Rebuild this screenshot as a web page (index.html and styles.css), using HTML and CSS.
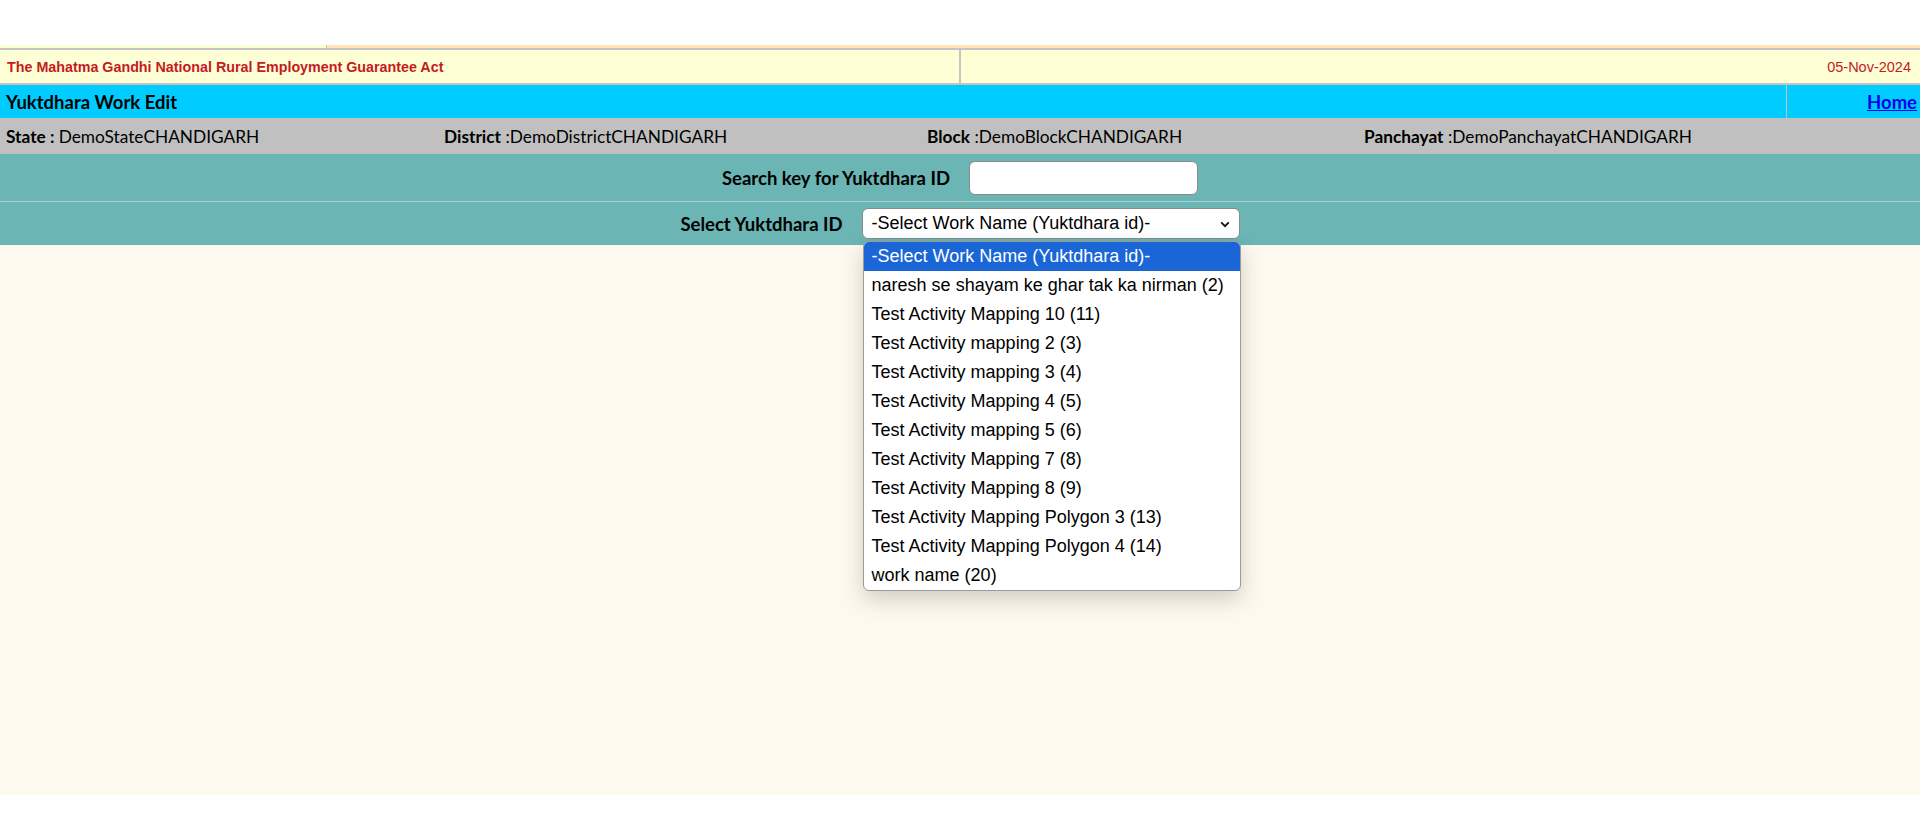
FILE: index.html
```html
<!DOCTYPE html>
<html lang="en">
<head>
<meta charset="utf-8">
<title>Yuktdhara Work Edit</title>
<link rel="stylesheet" href="styles.css">
</head>
<body>
<div class="topspace"></div>
<div class="page">
  <div class="strip"><div class="strip-left"></div><div class="strip-right"></div></div>
  <div class="actbar">
    <div class="act-title">The Mahatma Gandhi National Rural Employment Guarantee Act</div>
    <div class="act-date">05-Nov-2024</div>
  </div>
  <div class="titlebar">
    <div class="title">Yuktdhara Work Edit</div>
    <div class="home"><a href="#">Home</a></div>
  </div>
  <div class="locbar">
    <div class="loc"><b>State : </b>DemoStateCHANDIGARH</div>
    <div class="loc"><b>District</b> :DemoDistrictCHANDIGARH</div>
    <div class="loc"><b>Block</b> :DemoBlockCHANDIGARH</div>
    <div class="loc"><b>Panchayat</b> :DemoPanchayatCHANDIGARH</div>
  </div>
  <div class="formrow row1">
    <div class="flabel">Search key for Yuktdhara ID</div>
    <div class="searchbox"></div>
  </div>
  <div class="formrow row2">
    <div class="flabel">Select Yuktdhara ID</div>
    <div class="selwrap">
      <div class="select">-Select Work Name (Yuktdhara id)-
        <svg class="chev" width="10" height="7" viewBox="0 0 10 7"><path d="M1.2 1.3 L5 5.2 L8.8 1.3" fill="none" stroke="#111" stroke-width="1.8"/></svg>
      </div>
      <div class="popup">
        <div class="opt sel">-Select Work Name (Yuktdhara id)-</div>
        <div class="opt">naresh se shayam ke ghar tak ka nirman (2)</div>
        <div class="opt">Test Activity Mapping 10 (11)</div>
        <div class="opt">Test Activity mapping 2 (3)</div>
        <div class="opt">Test Activity mapping 3 (4)</div>
        <div class="opt">Test Activity Mapping 4 (5)</div>
        <div class="opt">Test Activity mapping 5 (6)</div>
        <div class="opt">Test Activity Mapping 7 (8)</div>
        <div class="opt">Test Activity Mapping 8 (9)</div>
        <div class="opt">Test Activity Mapping Polygon 3 (13)</div>
        <div class="opt">Test Activity Mapping Polygon 4 (14)</div>
        <div class="opt">work name (20)</div>
      </div>
    </div>
  </div>
</div>
</body>
</html>
```

FILE: styles.css
```css
html, body {
  margin: 0;
  padding: 0;
  background: #ffffff;
}
body {
  font-family: "Lato", "Open Sans", sans-serif;
  color: #000;
}
.topspace {
  height: 45px;
}
.page {
  background: #fef9ee;
  height: 750px;
}
.strip {
  display: flex;
  height: 3px;
}
.strip-left {
  width: 326px;
  background: #ffffd6;
  border-right: 1px solid #c8c8c8;
}
.strip-right {
  flex: 1;
  background: #ffe4b5;
}
.actbar {
  display: grid;
  grid-template-columns: 961px 1fr;
  height: 33px;
  border-top: 2px solid #c4c4c4;
  border-bottom: 2px solid #c4c4c4;
  background: #ffffd6;
  font-family: "Liberation Sans", Arial, sans-serif;
  font-size: 14.3px;
  color: #c41a24;
}
.act-title {
  font-weight: bold;
  padding-left: 7px;
  display: flex;
  align-items: center;
  border-right: 2px solid #c4c4c4;
}
.act-date {
  display: flex;
  align-items: center;
  justify-content: flex-end;
  padding-right: 9px;
  font-size: 14.5px;
}
.titlebar {
  display: grid;
  grid-template-columns: 1787px 1fr;
  height: 33px;
  background: #00ccff;
  border-bottom: 1px solid #c4c4c4;
}
.title {
  font-weight: bold;
  font-size: 18.5px;
  padding-left: 6px;
  display: flex;
  align-items: center;
  border-right: 1px solid #c4c4c4;
}
.home {
  display: flex;
  align-items: center;
  justify-content: flex-end;
  padding-right: 3px;
  font-weight: bold;
  font-size: 18.5px;
}
.home a {
  color: #0000ee;
  text-decoration: underline;
}
.locbar {
  display: grid;
  grid-template-columns: 438px 483px 437px 1fr;
  height: 35px;
  background: #c0c0c0;
  font-size: 17.3px;
}
.loc {
  display: flex;
  align-items: center;
  padding-left: 6px;
  white-space: pre;
}
.formrow {
  display: flex;
  justify-content: center;
  align-items: center;
  background: #6bb5b5;
  font-weight: bold;
  font-size: 18.5px;
}
.row1 {
  height: 47px;
  border-bottom: 1px solid #a9d2d2;
}
.row2 {
  height: 43px;
}
.flabel {
  margin-right: 19px;
}
.searchbox {
  width: 227px;
  height: 32px;
  background: #fff;
  border: 1px solid #8a8a8a;
  border-radius: 6px;
}
.selwrap {
  position: relative;
}
.select {
  width: 367px;
  height: 29px;
  background: #fff;
  border: 1px solid #8a8a8a;
  border-radius: 6px;
  font-family: "Liberation Sans", Arial, sans-serif;
  font-weight: normal;
  font-size: 18px;
  display: flex;
  align-items: center;
  padding-left: 9px;
  position: relative;
}
.chev {
  position: absolute;
  right: 9px;
  top: 12px;
}
.popup {
  position: absolute;
  left: 1px;
  top: 33px;
  width: 376px;
  background: #fff;
  border: 1px solid #9a9a9a;
  border-radius: 6px;
  box-shadow: 0 8px 22px rgba(0, 0, 0, 0.18);
  overflow: hidden;
  font-family: "Liberation Sans", Arial, sans-serif;
  font-weight: normal;
  font-size: 18px;
}
.opt {
  height: 29px;
  line-height: 29px;
  padding-left: 8px;
  color: #000;
  white-space: nowrap;
}
.opt.sel {
  background: #1a66d6;
  color: #fff;
}
```
